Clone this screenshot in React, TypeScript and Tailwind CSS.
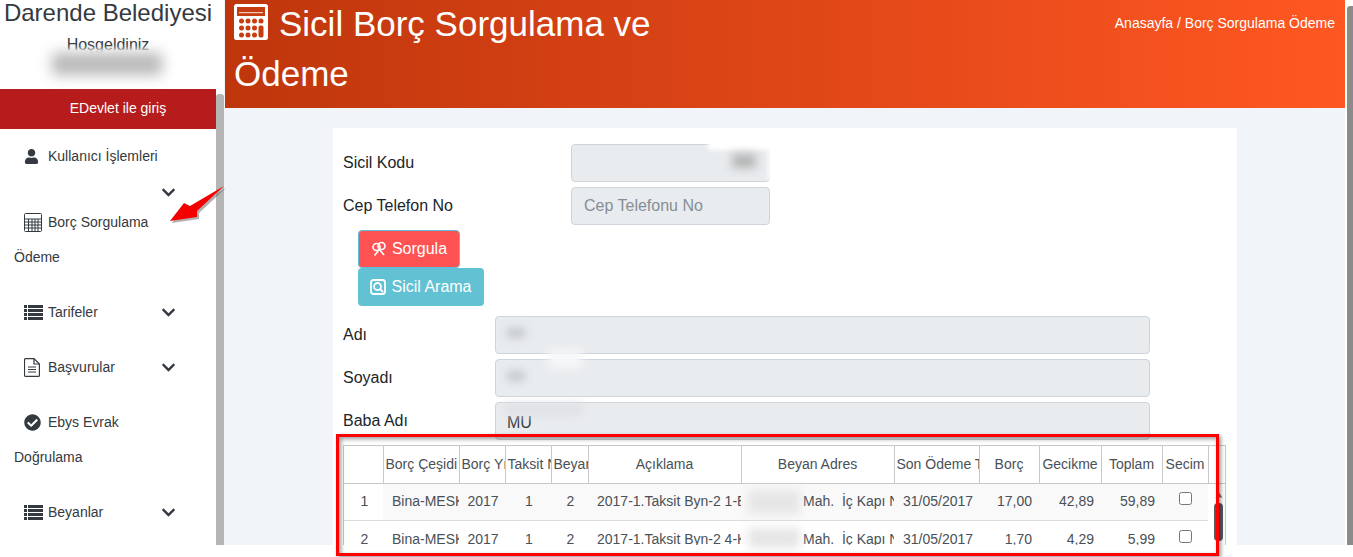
import { FaCheckCircle, FaChevronDown, FaUser } from "react-icons/fa";

function Calculator({ className }: { className: string }) {
	return (
		<svg viewBox="0 0 34 36" className={className}>
			<rect width="34" height="36" rx="2.500" fill="#fff" />
			<g fill="#c53d10">
				<rect x="3" y="3" width="28" height="9" />
				<circle cx="7.500" cy="17" r="2.500" />
				<circle cx="14" cy="17" r="2.500" />
				<circle cx="20.500" cy="17" r="2.500" />
				<circle cx="27" cy="17" r="2.500" />
				<circle cx="7.500" cy="24" r="2.500" />
				<circle cx="14" cy="24" r="2.500" />
				<circle cx="20.500" cy="24" r="2.500" />
				<circle cx="7.500" cy="31" r="2.500" />
				<circle cx="14" cy="31" r="2.500" />
				<circle cx="20.500" cy="31" r="2.500" />
				<rect x="24.500" y="21.500" width="5" height="12" rx="2" />
			</g>
			<rect x="5" y="8" width="24" height="1.200" fill="#fff" opacity="0.700" />
		</svg>
	);
}

function CalcGrid() {
	return (
		<svg viewBox="0 0 18 19" className="w-[18px] h-[19px] text-[#343a40]" fill="none" stroke="currentColor">
			<rect x="0.500" y="0.500" width="17" height="18" rx="1" />
			<path d="M1 6h16M1 9h16M1 12h16M1 15h16M4.500 6v12M8 6v12M11 6v12M14 6v12" />
		</svg>
	);
}

function ListIcon() {
	return (
		<svg viewBox="0 0 19 15" className="w-[19px] h-[15px] text-[#343a40]" fill="currentColor">
			<path d="M0 0h3v3H0zM4 0h15v3H4zM0 4h3v3H0zM4 4h15v3H4zM0 8h3v3H0zM4 8h15v3H4zM0 12h3v3H0zM4 12h15v3H4z" />
		</svg>
	);
}

function DocIcon() {
	return (
		<svg viewBox="0 0 16 19" className="w-[16px] h-[19px] text-[#343a40]" fill="none" stroke="currentColor" strokeWidth="1.200">
			<path d="M1.500 0.600h8.500l5.400 5.400v11.400a1 1 0 0 1-1 1H1.500a1 1 0 0 1-1-1V1.600a1 1 0 0 1 1-1z" />
			<path d="M10 0.600v5.400h5.400M4 9h8M4 11.500h8M4 14h8" />
		</svg>
	);
}

function MenuItem({ icon, label, second, arrow, mt }: { icon: React.ReactNode; label: string; second?: string; arrow?: boolean; mt: string }) {
	return (
		<div className={`${mt} text-[14px] leading-[20px] text-[#343a40]`}>
			<div className="flex items-center h-[20px] pl-6">
				<span className="w-6 flex items-center">{icon}</span>
				<span>{label}</span>
				{arrow && <FaChevronDown className="ml-auto mr-[40px] w-[15px] h-[15px] text-[#343a40]" />}
			</div>
			{second && <div className="pl-[14px] mt-[15px]">{second}</div>}
		</div>
	);
}

const headers = ["", "Borç Çeşidi", "Borç Yılı", "Taksit No", "Beyan", "Açıklama", "Beyan Adres", "Son Ödeme Tarihi", "Borç", "Gecikme", "Toplam", "Secim", " "];
const rows = [
	["1", "2017-1.Taksit Byn-2 1-EMLAK", "17,00", "42,89", "59,89"],
	["2", "2017-1.Taksit Byn-2 4-KAT", "1,70", "4,29", "5,99"],
];
const line = "border-b border-[#dcdcdc]";

export default function App() {
	return (
		<div className="w-[1353px] h-[557px] overflow-hidden relative bg-white font-['Liberation_Sans',Arial,sans-serif]">
			<div className="flex h-[545px]">
				<aside className="w-[216px] shrink-0 bg-white overflow-hidden">
					<div className="text-center text-[24px] leading-[26px] text-[#343a40] whitespace-nowrap">Darende Belediyesi</div>
					<div className="text-center text-[16px] leading-[20px] text-[#343a40] mt-[9px]">Hoşgeldiniz</div>
					<div className="h-[30px] mt-[7px] relative">
						<div className="absolute left-[46px] top-[-13px] w-[128px] h-[9px] bg-white blur-[2px]" />
						<div className="absolute left-[52px] top-[-9px] w-[110px] h-[22px] bg-[#9a9a9a] blur-[7px] opacity-70" />
					</div>
					<div className="mt-[-3px] h-[40px] bg-[#b71c1c] text-white text-[14px] flex items-center justify-center pl-[20px] pb-[2px]">EDevlet ile giriş</div>
					<MenuItem mt="mt-[17px]" icon={<FaUser className="w-[15px] h-[15px] text-[#343a40]" />} label="Kullanıcı İşlemleri" />
					<div className="h-[20px] mt-[16px] flex justify-end pr-[40px] items-center">
						<FaChevronDown className="w-[15px] h-[15px] text-[#343a40]" />
					</div>
					<MenuItem mt="mt-[10px]" icon={<CalcGrid />} label="Borç Sorgulama" second="Ödeme" />
					<MenuItem mt="mt-[35px]" icon={<ListIcon />} label="Tarifeler" arrow />
					<MenuItem mt="mt-[35px]" icon={<DocIcon />} label="Başvurular" arrow />
					<MenuItem mt="mt-[35px]" icon={<FaCheckCircle className="w-[17px] h-[17px] text-[#343a40]" />} label="Ebys Evrak" second="Doğrulama" />
					<MenuItem mt="mt-[35px]" icon={<ListIcon />} label="Beyanlar" arrow />
				</aside>
				<div className="w-[8px] shrink-0 bg-white flex flex-col">
					<div className="h-[94px]" />
					<div className="flex-1 bg-[#b5b5b5] rounded-t-[3px]" />
				</div>
				<div className="w-[1px] shrink-0 bg-[#f1f4f8]" />
				<main className="w-[1120px] shrink-0 bg-[#f1f4f8] overflow-hidden">
					<header className="h-[108px] bg-gradient-to-r from-[#bf360c] to-[#ff5722] flex justify-between text-white">
						<h1 className="w-[480px] pl-[9px] text-[35px] leading-[50px] font-normal -mt-[1px]">
							<Calculator className="inline-block w-[34px] h-[36px] mr-[11px] align-[-4px]" />
							Sicil Borç Sorgulama ve Ödeme
						</h1>
						<div className="text-[14px] leading-[20px] pt-[13px] pr-[10px] whitespace-nowrap">Anasayfa / Borç Sorgulama Ödeme</div>
					</header>
					<section className="ml-[108px] w-[904px] mt-[20px] bg-white px-[10px] pt-[16px] h-[500px] text-[16px] text-[#212529]">
						<div className="flex items-center gap-0 h-[38px]">
							<label className="w-[228px]">Sicil Kodu</label>
							<div className="w-[199px] h-[38px] bg-[#e9ecef] border border-[#ced4da] rounded-[4px]" />
						</div>
						<div className="flex items-center h-[38px] mt-[5px]">
							<label className="w-[228px]">Cep Telefon No</label>
							<div className="w-[199px] h-[38px] bg-[#e9ecef] border border-[#ced4da] rounded-[4px] px-3 flex items-center text-[#868e96]">Cep Telefonu No</div>
						</div>
						<div className="pl-[15px] mt-[5px] flex flex-col items-start">
							<button className="h-[38px] w-[102px] bg-[#ff5252] text-white rounded-[4px] border border-[#5bc0de] flex items-center justify-center gap-[5px]">
								<svg viewBox="0 0 16 16" className="w-4 h-4" fill="none" stroke="currentColor" strokeWidth="1.600">
									<circle cx="10.500" cy="5" r="3.500" />
									<circle cx="5.500" cy="6" r="3.500" />
									<path d="M8 8l5 6M7.500 9.500l-4 5" />
								</svg>
								Sorgula
							</button>
							<button className="h-[38px] w-[126px] bg-[#62c1d3] text-white rounded-[4px] flex items-center justify-center gap-[5px]">
								<svg viewBox="0 0 16 16" className="w-4 h-4" fill="none" stroke="currentColor" strokeWidth="1.800">
									<rect x="1" y="1" width="14" height="14" rx="2.500" />
									<circle cx="7.500" cy="7.500" r="3.500" />
									<path d="M10 10l3 3" />
								</svg>
								Sicil Arama
							</button>
						</div>
						{["Adı", "Soyadı", "Baba Adı"].map((label, i) => (
							<div key={label} className={`flex items-center h-[38px] ${i === 0 ? "mt-[10px]" : "mt-[5px]"}`}>
								<label className="w-[152px]">{label}</label>
								<div className="w-[655px] h-[38px] bg-[#e9ecef] border border-[#ced4da] rounded-[4px] pl-[11px] pt-[3px] flex items-center text-[#343a40]">
									{label === "Baba Adı" ? "MU" : ""}
								</div>
							</div>
						))}
						<div className="mt-[5px] w-[883px] border-t border-x border-[#c8c8c8] text-[14px] text-[#495057]">
							<table className="table-fixed border-collapse w-[881px]">
								<colgroup>
									<col className="w-[39px]" />
									<col className="w-[76px]" />
									<col className="w-[46px]" />
									<col className="w-[46px]" />
									<col className="w-[37px]" />
									<col className="w-[153px]" />
									<col className="w-[153px]" />
									<col className="w-[85px]" />
									<col className="w-[60px]" />
									<col className="w-[62px]" />
									<col className="w-[61px]" />
									<col className="w-[46px]" />
									<col className="w-[17px]" />
								</colgroup>
								<thead>
									<tr className="h-[37px] border-b border-[#c8c8c8]">
										{headers.map((h, i) => (
											<th key={h} className={`font-normal text-center whitespace-nowrap overflow-hidden px-[2px] pt-[1px] align-middle ${i < 12 ? "border-r border-[#c8c8c8]" : ""}`}>{h}</th>
										))}
									</tr>
								</thead>
								<tbody>
									{rows.map((r, i) => (
										<tr key={r[0]} className={i === 0 ? "h-[37px] bg-[#f9f9f9]" : "h-[39px]"}>
											<td className="text-center pl-[2px] bg-white border-b border-[#dcdcdc]">{r[0]}</td>
											<td className={`${line} overflow-hidden whitespace-nowrap pl-[9px]`}>Bina-MESKEN</td>
											<td className={`${line} text-center pl-[2px]`}>2017</td>
											<td className={`${line} text-center pl-[2px]`}>1</td>
											<td className={`${line} text-center pl-[2px]`}>2</td>
											<td className={`${line} overflow-hidden whitespace-nowrap pl-[9px]`}>{r[1]}</td>
											<td className={`${line} overflow-hidden whitespace-nowrap pl-[62px]`}>Mah.&nbsp; İç Kapı No</td>
											<td className={`${line} pl-[9px]`}>31/05/2017</td>
											<td className={`${line} text-right pr-[7px]`}>{r[2]}</td>
											<td className={`${line} text-right pr-[7px]`}>{r[3]}</td>
											<td className={`${line} text-right pr-[7px]`}>{r[4]}</td>
											<td className={`${line} text-center`}>
												<input type="checkbox" className="w-[13px] h-[13px] align-[1px]" readOnly />
											</td>
											<td className="bg-white" />
										</tr>
									))}
								</tbody>
							</table>
						</div>
					</section>
				</main>
				<div className="w-[6px] ml-[2px] shrink-0 bg-[#8b8b8b] rounded-tl-[3px] mt-[6px]" />
			</div>

			{/* blurred personal data, annotation arrow and frame drawn over the shot */}
			<div className="absolute left-[708px] top-[140px] w-[70px] h-[10px] bg-white blur-[2px]" />
			<div className="absolute left-[768px] top-[144px] w-[8px] h-[36px] bg-white blur-[2px]" />
			<div className="absolute left-[732px] top-[154px] w-[24px] h-[14px] bg-[#b4b4b4] blur-[5px]" />
			<div className="absolute left-[507px] top-[328px] w-[18px] h-[10px] bg-[#c4c8cc] blur-[4px]" />
			<div className="absolute left-[507px] top-[371px] w-[18px] h-[10px] bg-[#c4c8cc] blur-[4px]" />
			<div className="absolute left-[548px] top-[350px] w-[34px] h-[18px] bg-[#f6f7f8] blur-[5px]" />
			<div className="absolute left-[505px] top-[403px] w-[78px] h-[13px] bg-[#dfe1e4] blur-[4px]" />
			<div className="absolute left-[748px] top-[490px] w-[52px] h-[24px] bg-[#e6e6e6] blur-[5px]" />
			<div className="absolute left-[748px] top-[528px] w-[52px] h-[20px] bg-[#e6e6e6] blur-[5px]" />
			<svg className="absolute left-[1215px] top-[492px] w-[8px] h-[6px]" viewBox="0 0 8 6">
				<path d="M4 0.500L7.500 5.500H0.500z" fill="#7a7a7a" />
			</svg>
			<div className="absolute left-[1214px] top-[503px] w-[9px] h-[38px] rounded-[4px] bg-[#5a5a5f]" />
			<div className="absolute left-[336px] top-[434px] w-[883px] h-[122px] border-[3px] border-[#ff0000] shadow-[2px_2px_4px_rgba(0,0,0,0.4),inset_2px_2px_4px_rgba(0,0,0,0.4)]" />
			<svg className="absolute left-[165px] top-[180px] w-[65px] h-[50px]" viewBox="0 0 65 50">
				<path d="M5 41L19 23l6 3L59 6 32 31l0 6z" fill="#6f6f6f" opacity="0.550" transform="translate(2 2)" />
				<path d="M5 41L19 23l6 3L59 6 32 31l0 6z" fill="#f40000" />
			</svg>
		</div>
	);
}
